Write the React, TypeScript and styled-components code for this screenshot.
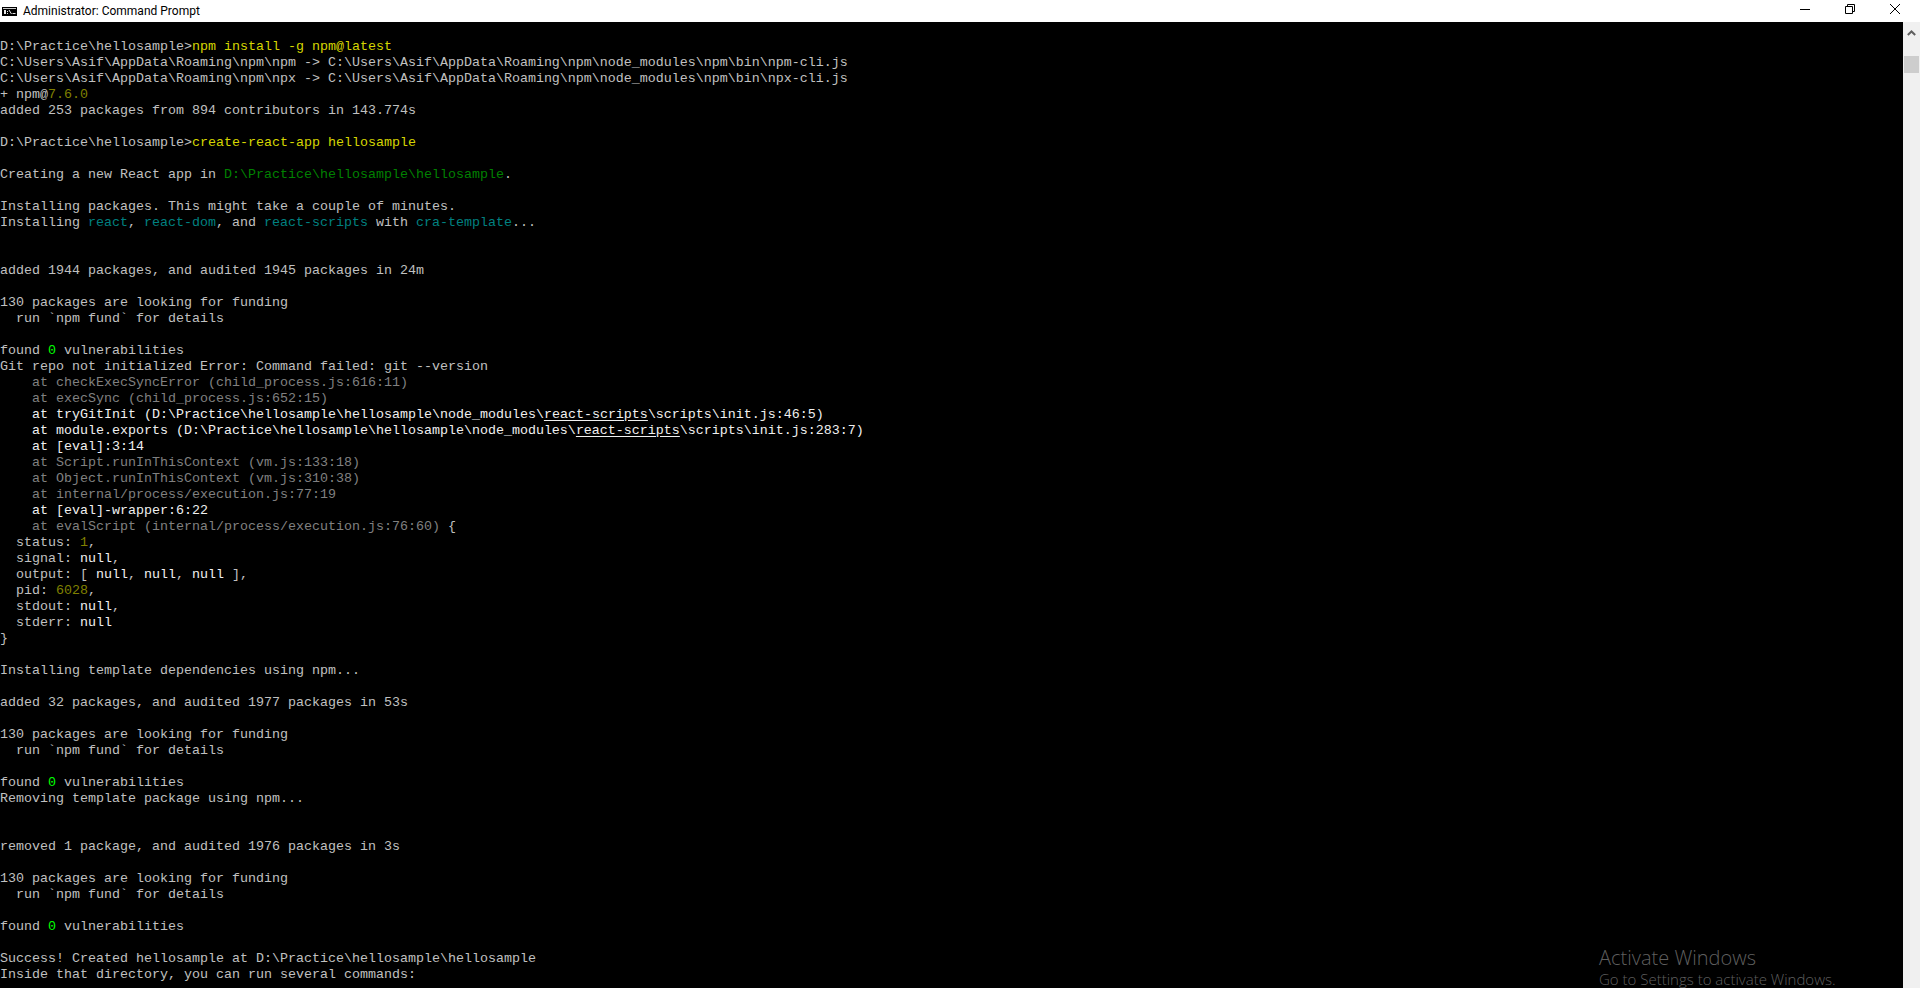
import styled, { createGlobalStyle } from "styled-components";

type Tone = "base" | "cmd" | "path" | "link" | "ok" | "num" | "dim" | "bright" | "under";
type Seg = [string, Tone?];

const TONES: Record<Tone, string> = {
  base: "#c0c0c0",
  cmd: "#d6d600",
  path: "#008000",
  link: "#008080",
  ok: "#00ff00",
  num: "#808000",
  dim: "#808080",
  bright: "#f0f0f0",
  under: "#f0f0f0",
};

const PROMPT = "D:\\Practice\\hellosample>";
const FUNDING: Seg[][] = [
  [["130 packages are looking for funding"]],
  [["  run `npm fund` for details"]],
  [],
  [["found "], ["0", "ok"], [" vulnerabilities"]],
];

const LINES: Seg[][] = [
  [],
  [[PROMPT], ["npm install -g npm@latest", "cmd"]],
  [["C:\\Users\\Asif\\AppData\\Roaming\\npm\\npm -> C:\\Users\\Asif\\AppData\\Roaming\\npm\\node_modules\\npm\\bin\\npm-cli.js"]],
  [["C:\\Users\\Asif\\AppData\\Roaming\\npm\\npx -> C:\\Users\\Asif\\AppData\\Roaming\\npm\\node_modules\\npm\\bin\\npx-cli.js"]],
  [["+ npm@"], ["7.6.0", "num"]],
  [["added 253 packages from 894 contributors in 143.774s"]],
  [],
  [[PROMPT], ["create-react-app hellosample", "cmd"]],
  [],
  [["Creating a new React app in "], ["D:\\Practice\\hellosample\\hellosample", "path"], ["."]],
  [],
  [["Installing packages. This might take a couple of minutes."]],
  [["Installing "], ["react", "link"], [", "], ["react-dom", "link"], [", and "], ["react-scripts", "link"], [" with "], ["cra-template", "link"], ["..."]],
  [],
  [],
  [["added 1944 packages, and audited 1945 packages in 24m"]],
  [],
  ...FUNDING,
  [["Git repo not initialized Error: Command failed: git --version"]],
  [["    at checkExecSyncError (child_process.js:616:11)", "dim"]],
  [["    at execSync (child_process.js:652:15)", "dim"]],
  [["    at tryGitInit (D:\\Practice\\hellosample\\hellosample\\node_modules\\", "bright"], ["react-scripts", "under"], ["\\scripts\\init.js:46:5)", "bright"]],
  [["    at module.exports (D:\\Practice\\hellosample\\hellosample\\node_modules\\", "bright"], ["react-scripts", "under"], ["\\scripts\\init.js:283:7)", "bright"]],
  [["    at [eval]:3:14", "bright"]],
  [["    at Script.runInThisContext (vm.js:133:18)", "dim"]],
  [["    at Object.runInThisContext (vm.js:310:38)", "dim"]],
  [["    at internal/process/execution.js:77:19", "dim"]],
  [["    at [eval]-wrapper:6:22", "bright"]],
  [["    at evalScript (internal/process/execution.js:76:60)", "dim"], [" {"]],
  [["  status: "], ["1", "num"], [","]],
  [["  signal: "], ["null", "bright"], [","]],
  [["  output: [ "], ["null", "bright"], [", "], ["null", "bright"], [", "], ["null", "bright"], [" ],"]],
  [["  pid: "], ["6028", "num"], [","]],
  [["  stdout: "], ["null", "bright"], [","]],
  [["  stderr: "], ["null", "bright"]],
  [["}"]],
  [],
  [["Installing template dependencies using npm..."]],
  [],
  [["added 32 packages, and audited 1977 packages in 53s"]],
  [],
  ...FUNDING,
  [["Removing template package using npm..."]],
  [],
  [],
  [["removed 1 package, and audited 1976 packages in 3s"]],
  [],
  ...FUNDING,
  [],
  [["Success! Created hellosample at D:\\Practice\\hellosample\\hellosample"]],
  [["Inside that directory, you can run several commands:"]],
];

const GlobalStyle = createGlobalStyle`
  html, body {
    margin: 0;
    height: 100%;
    overflow: hidden;
    background: #000;
  }
`;

const Window = styled.div`
  height: 988px;
  display: flex;
  flex-direction: column;
  overflow: hidden;
  position: relative;
`;

const TitleBar = styled.header`
  height: 22px;
  flex: none;
  background: #fff;
  display: flex;
  align-items: center;
  padding: 0 3px 0 2px;
`;

const IconSlot = styled.div`
  margin-top: 1px;
  display: flex;
`;

const Title = styled.span`
  font: 12px Roboto, sans-serif;
  color: #000;
  margin-left: 6px;
  flex: 1;
`;

const CaptionButton = styled.div`
  width: 45px;
  height: 18px;
  align-self: flex-start;
  display: flex;
  align-items: center;
  justify-content: center;
  color: #000;
`;

const Content = styled.main`
  flex: 1;
  min-height: 0;
  display: flex;
`;

const Console = styled.div`
  flex: 1;
  background: #000;
  overflow: hidden;
  padding-top: 1px;
`;

const Line = styled.div`
  height: 16px;
  font: 13.333px/16px "Liberation Mono", monospace;
  white-space: pre;
`;

const Segment = styled.span<{ $tone: Tone }>`
  color: ${(props) => TONES[props.$tone]};
  text-decoration: ${(props) => (props.$tone === "under" ? "underline" : "none")};
  text-underline-offset: 2px;
`;

const ScrollBar = styled.aside`
  width: 17px;
  flex: none;
  background: #f0f0f0;
  display: flex;
  flex-direction: column;
  align-items: center;
`;

const ScrollArrow = styled.div`
  height: 17px;
  margin-top: 2px;
  margin-bottom: 15px;
  display: flex;
  align-items: center;
`;

const ScrollThumb = styled.div`
  width: 15px;
  height: 17px;
  background: #cdcdcd;
`;

const Watermark = styled.div`
  position: absolute;
  left: 1599px;
  top: 945px;
  color: #5f5f5f;
  font-family: "Open Sans", sans-serif;
  font-weight: 300;
  white-space: nowrap;
`;

const WatermarkTitle = styled.div`
  font-size: 20px;
  line-height: 26px;
`;

const WatermarkHint = styled.div`
  font-size: 15px;
  line-height: 17px;
`;

function ConsoleIcon() {
  return (
    <svg width="15" height="9" viewBox="0 0 15 9">
      <rect x="0" y="0" width="15" height="9" fill="#000" />
      <rect x="1" y="1" width="13" height="1" fill="#c8c8c8" />
      <rect x="2" y="3" width="2" height="4" fill="#e8e8e8" />
      <rect x="5" y="4" width="1" height="1" fill="#e8e8e8" />
      <rect x="5" y="6" width="1" height="1" fill="#e8e8e8" />
      <path d="M7 3 L9.5 7" stroke="#e8e8e8" strokeWidth="1" />
      <rect x="10.5" y="6" width="3" height="1" fill="#e8e8e8" />
    </svg>
  );
}

export default function App() {
  return (
    <Window>
      <GlobalStyle />
      <TitleBar>
        <IconSlot>
          <ConsoleIcon />
        </IconSlot>
        <Title>Administrator: Command Prompt</Title>
        <CaptionButton>
          <svg width="10" height="10" viewBox="0 0 10 10">
            <path d="M0 5.5H10" stroke="#000" strokeWidth="1" />
          </svg>
        </CaptionButton>
        <CaptionButton>
          <svg width="10" height="10" viewBox="0 0 10 10" fill="none" stroke="#000">
            <path d="M0.5 2.5H7.5V9.5H0.5Z" />
            <path d="M2.5 2.5V0.5H9.5V7.5H7.5" />
          </svg>
        </CaptionButton>
        <CaptionButton>
          <svg width="10" height="10" viewBox="0 0 10 10" fill="none" stroke="#000">
            <path d="M0 0L10 10M10 0L0 10" />
          </svg>
        </CaptionButton>
      </TitleBar>
      <Content>
        <Console>
          {LINES.map((segs, i) => (
            <Line key={i}>
              {segs.map(([text, tone], j) => (
                <Segment key={j} $tone={tone || "base"}>
                  {text}
                </Segment>
              ))}
            </Line>
          ))}
        </Console>
        <ScrollBar>
          <ScrollArrow>
            <svg width="9" height="6" viewBox="0 0 9 6" fill="none" stroke="#606060" strokeWidth="2">
              <path d="M0.8 5L4.5 1.5L8.2 5" />
            </svg>
          </ScrollArrow>
          <ScrollThumb />
        </ScrollBar>
      </Content>
      <Watermark>
        <WatermarkTitle>Activate Windows</WatermarkTitle>
        <WatermarkHint>Go to Settings to activate Windows.</WatermarkHint>
      </Watermark>
    </Window>
  );
}
